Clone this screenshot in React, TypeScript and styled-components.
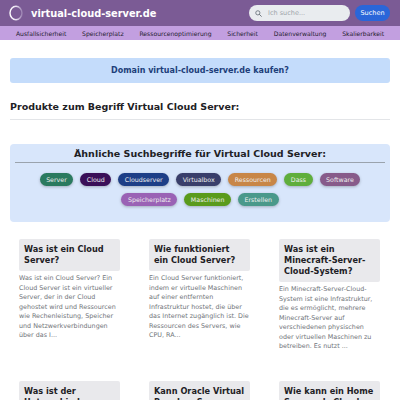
import React from 'react';
import styled, { createGlobalStyle } from 'styled-components';

const GlobalStyle = createGlobalStyle`
    html, body {
        margin: 0;
        padding: 0;
        background: #ffffff;
        font-family: "DejaVu Sans", Verdana, sans-serif;
        color: #212529;
    }
    * {
        box-sizing: border-box;
    }
`;

const navItems = [
    'Ausfallsicherheit',
    'Speicherplatz',
    'Ressourcenoptimierung',
    'Sicherheit',
    'Datenverwaltung',
    'Skalierbarkeit',
];

interface Tag {
    label: string;
    color: string;
}

const tagRows: Tag[][] = [
    [
        { label: 'Server', color: '#2a7a5f' },
        { label: 'Cloud', color: '#3a0f58' },
        { label: 'Cloudserver', color: '#1d3e87' },
        { label: 'Virtualbox', color: '#393e6b' },
        { label: 'Ressourcen', color: '#c88647' },
        { label: 'Dass', color: '#5fae3c' },
        { label: 'Software', color: '#875b8a' },
    ],
    [
        { label: 'Speicherplatz', color: '#9a62b5' },
        { label: 'Maschinen', color: '#5a9b1c' },
        { label: 'Erstellen', color: '#4a998a' },
    ],
];

interface Question {
    title: string;
    text: string;
}

const questions: Question[] = [
    {
        title: 'Was ist ein Cloud Server?',
        text: 'Was ist ein Cloud Server? Ein Cloud Server ist ein virtueller Server, der in der Cloud gehostet wird und Ressourcen wie Rechenleistung, Speicher und Netzwerkverbindungen über das I...',
    },
    {
        title: 'Wie funktioniert ein Cloud Server?',
        text: 'Ein Cloud Server funktioniert, indem er virtuelle Maschinen auf einer entfernten Infrastruktur hostet, die über das Internet zugänglich ist. Die Ressourcen des Servers, wie CPU, RA...',
    },
    {
        title: 'Was ist ein Minecraft-Server-Cloud-System?',
        text: 'Ein Minecraft-Server-Cloud-System ist eine Infrastruktur, die es ermöglicht, mehrere Minecraft-Server auf verschiedenen physischen oder virtuellen Maschinen zu betreiben. Es nutzt ...',
    },
    {
        title: 'Was ist der Unterschied zwischen Cloud und Server?',
        text: '',
    },
    {
        title: 'Kann Oracle Virtual Box dem Server helfen?',
        text: '',
    },
    {
        title: 'Wie kann ein Home Server als Cloud dienen?',
        text: '',
    },
];

const Logo = () => (
    <svg width="14" height="16" viewBox="0 0 14 16">
        <defs>
            <linearGradient id="ring" x1="0" y1="0" x2="1" y2="0">
                <stop offset="0" stopColor="#ffffff" />
                <stop offset="0.55" stopColor="#e6dcef" />
                <stop offset="1" stopColor="#9b82b2" />
            </linearGradient>
        </defs>
        <ellipse cx="7" cy="8" rx="6" ry="6.8" fill="none" stroke="url(#ring)" strokeWidth="1.4" />
    </svg>
);

const SearchIcon = () => (
    <svg width="7" height="7" viewBox="0 0 16 16">
        <circle cx="6.5" cy="6.5" r="4.8" fill="none" stroke="#6c757d" strokeWidth="2" />
        <path d="M10 10 L14.5 14.5" stroke="#6c757d" strokeWidth="2.2" strokeLinecap="round" />
    </svg>
);

const App = () => {
    return (
        <>
            <GlobalStyle />
            <Header>
                <Brand>
                    <Logo />
                    <SiteName>virtual-cloud-server.de</SiteName>
                </Brand>
                <SearchForm>
                    <SearchField>
                        <SearchIcon />
                        <span>Ich suche...</span>
                    </SearchField>
                    <SearchButton>Suchen</SearchButton>
                </SearchForm>
            </Header>
            <Nav>
                {navItems.map((item) => (
                    <NavLink key={item}>{item}</NavLink>
                ))}
            </Nav>
            <Main>
                <DomainBanner>Domain virtual-cloud-server.de kaufen?</DomainBanner>
                <SectionTitle>Produkte zum Begriff Virtual Cloud Server:</SectionTitle>
                <RelatedBox>
                    <RelatedTitle>Ähnliche Suchbegriffe für Virtual Cloud Server:</RelatedTitle>
                    {tagRows.map((row, i) => (
                        <TagRow key={i}>
                            {row.map((tag) => (
                                <TagPill key={tag.label} bg={tag.color}>
                                    {tag.label}
                                </TagPill>
                            ))}
                        </TagRow>
                    ))}
                </RelatedBox>
                <QuestionGrid>
                    {questions.map((q) => (
                        <QuestionCard key={q.title}>
                            <QuestionTitle>{q.title}</QuestionTitle>
                            {q.text && <QuestionText>{q.text}</QuestionText>}
                        </QuestionCard>
                    ))}
                </QuestionGrid>
            </Main>
        </>
    );
};

export default App;

const Header = styled.header`
    display: flex;
    align-items: center;
    justify-content: space-between;
    height: 26px;
    padding: 0 10px 0 9px;
    background: #7b5b95;
`;
const Brand = styled.div`
    display: flex;
    align-items: center;
    gap: 8px;
`;
const SiteName = styled.span`
    color: #ffffff;
    font-size: 9.8px;
    font-weight: bold;
`;
const SearchForm = styled.div`
    display: flex;
    align-items: center;
    gap: 5px;
`;
const SearchField = styled.div`
    display: flex;
    align-items: center;
    gap: 6px;
    width: 101px;
    height: 16px;
    padding: 0 6px;
    border-radius: 8px;
    background: #e9ecef;
    color: #a0a5aa;
    font-size: 6.5px;
`;
const SearchButton = styled.button`
    height: 16px;
    width: 35px;
    padding: 0;
    border: none;
    border-radius: 8px;
    background: #2a66d9;
    color: #ffffff;
    font-family: inherit;
    font-size: 6.5px;
`;
const Nav = styled.nav`
    display: flex;
    justify-content: space-around;
    align-items: center;
    height: 14px;
    padding: 0 8px;
    background: #c29fe0;
`;
const NavLink = styled.a`
    color: #24202e;
    font-size: 6.1px;
`;
const Main = styled.main`
    padding: 18px 10px 0;
`;
const DomainBanner = styled.div`
    display: flex;
    justify-content: center;
    align-items: center;
    height: 25px;
    border-radius: 3px;
    background: #c4dcfb;
    color: #1d3f7a;
    font-size: 8px;
    font-weight: bold;
`;
const SectionTitle = styled.h2`
    margin: 18px 0 0;
    padding-bottom: 7px;
    border-bottom: 1px solid #e3e5e8;
    font-size: 9.5px;
    font-weight: bold;
    color: #1e2125;
`;
const RelatedBox = styled.section`
    margin-top: 24px;
    padding: 4px 5px 16px;
    border-radius: 4px;
    background: #d8e6fb;
`;
const RelatedTitle = styled.h3`
    margin: 0 0 10px;
    padding-bottom: 3px;
    border-bottom: 1px solid #9aa3ad;
    text-align: center;
    font-size: 9.5px;
    font-weight: bold;
    color: #1e2125;
`;
const TagRow = styled.div`
    display: flex;
    justify-content: center;
    gap: 7px;
    margin-bottom: 7px;
    &:last-child {
        margin-bottom: 0;
    }
`;
const TagPill = styled.span<{ bg: string }>`
    display: inline-flex;
    align-items: center;
    height: 13px;
    padding: 0 6.5px;
    border-radius: 7px;
    background: ${({ bg }) => bg};
    color: #eeeeee;
    font-size: 6.3px;
    box-shadow: 0 1px 3px rgba(0, 0, 0, 0.25);
`;
const QuestionGrid = styled.div`
    display: grid;
    grid-template-columns: repeat(3, 101px);
    column-gap: 29px;
    row-gap: 29px;
    padding: 17px 9px 0;
`;
const QuestionCard = styled.article`
    display: flex;
    flex-direction: column;
`;
const QuestionTitle = styled.h4`
    margin: 0;
    padding: 5px 5px 5px;
    border-radius: 2px;
    background: #e9e9ec;
    font-size: 8.2px;
    line-height: 11px;
    font-weight: bold;
    color: #1e2125;
`;
const QuestionText = styled.p`
    margin: 3px 0 0;
    font-size: 6.4px;
    line-height: 9.5px;
    color: #707479;
`;
